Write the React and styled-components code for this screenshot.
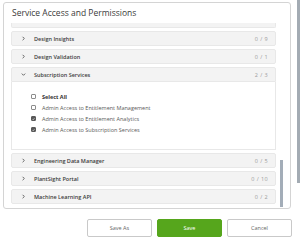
import React from 'react';
import styled, { createGlobalStyle } from 'styled-components';

const GlobalStyle = createGlobalStyle`
  html, body {
    margin: 0;
    padding: 0;
    background: #ffffff;
  }
  body {
    font-family: 'Open Sans', 'Liberation Sans', sans-serif;
    color: #333;
  }
`;

const Page = styled.div`
  display: flex;
  width: 301px;
  height: 240px;
  overflow: hidden;
`;

const Main = styled.div`
  width: 296px;
  padding: 2px 4px 0 3px;
  box-sizing: border-box;
  display: flex;
  flex-direction: column;
`;

const PageTrack = styled.div`
  width: 5px;
  display: flex;
  justify-content: flex-end;
  padding-right: 1px;
  box-sizing: border-box;
`;

const PageThumb = styled.div`
  width: 3px;
  height: 183px;
  background: #a3abb3;
`;

const Panel = styled.div`
  width: 288px;
  height: 207px;
  box-sizing: border-box;
  border: 1px solid #d4d4d4;
  border-radius: 3px;
  display: flex;
  flex-direction: column;
`;

const Title = styled.div`
  height: 20px;
  line-height: 20px;
  padding-left: 8px;
  font-size: 8.5px;
  color: #3a3a3a;
  flex-shrink: 0;
`;

const ScrollArea = styled.div`
  flex: 1;
  display: flex;
  min-height: 0;
  padding: 0 7px 0 7px;
`;

const ListViewport = styled.div`
  width: 265px;
  overflow: hidden;
`;

const List = styled.div`
  display: flex;
  flex-direction: column;
  gap: 3px;
`;

/* bottom edge of the group scrolled out above the viewport */
const ScrolledEdge = styled.div`
  height: 5px;
  box-sizing: border-box;
  background: #f3f3f3;
  border: 1px solid #e8e8e8;
  border-top: none;
  border-radius: 0 0 2px 2px;
`;

const InnerTrack = styled.div`
  width: 3px;
  margin-left: 4px;
  display: flex;
  flex-direction: column;
  justify-content: flex-end;
  padding-bottom: 1px;
`;

const InnerThumb = styled.div`
  height: 47px;
  background: #a3adb8;
`;

const Item = styled.div`
  display: flex;
  flex-direction: column;
`;

const Header = styled.div`
  height: 15px;
  box-sizing: border-box;
  display: flex;
  align-items: center;
  padding: 0 7px 0 9px;
  background: #f3f3f3;
  border: 1px solid #e8e8e8;
  border-radius: ${p => (p.$open ? '2px 2px 0 0' : '2px')};
`;

const Chevron = styled.svg`
  width: 5px;
  height: 5px;
  flex-shrink: 0;
`;

const Label = styled.span`
  margin-left: 8px;
  font-size: 5.5px;
  font-weight: 600;
  color: #3b3b3b;
  flex: 1;
  white-space: nowrap;
`;

const Count = styled.span`
  font-size: 5.5px;
  color: #9a9a9a;
  letter-spacing: 0.4px;
  white-space: nowrap;
`;

const Body = styled.div`
  height: 68px;
  box-sizing: border-box;
  border: 1px solid #e8e8e8;
  border-top: none;
  background: #fff;
  padding: 9px 0 0 19px;
  display: flex;
  flex-direction: column;
`;

const CheckRow = styled.div`
  height: 11px;
  display: flex;
  align-items: center;
`;

const Box = styled.span`
  width: 5px;
  height: 5px;
  box-sizing: border-box;
  border: 1px solid ${p => (p.$checked ? '#5a5a5a' : '#8c8c8c')};
  background: ${p => (p.$checked ? '#5a5a5a' : '#fff')};
  border-radius: 1px;
  display: flex;
  align-items: center;
  justify-content: center;
  flex-shrink: 0;
`;

const CheckLabel = styled.span`
  margin-left: 6px;
  font-size: 5.5px;
  font-weight: ${p => (p.$bold ? 700 : 400)};
  color: ${p => (p.$bold ? '#333' : '#5a5a5a')};
  white-space: nowrap;
`;

const Footer = styled.div`
  display: flex;
  justify-content: flex-end;
  gap: 5px;
  margin-top: 10px;
`;

const Button = styled.button`
  width: 65px;
  height: 18px;
  box-sizing: border-box;
  border: 1px solid ${p => (p.$primary ? '#56a61c' : '#c9c9c9')};
  background: ${p => (p.$primary ? '#56a61c' : '#fff')};
  color: ${p => (p.$primary ? '#fff' : '#666')};
  border-radius: 2px;
  font-family: 'Open Sans', 'Liberation Sans', sans-serif;
  font-size: 5.5px;
  padding: 0;
  cursor: pointer;
`;

const ChevronIcon = ({ open }) => (
  <Chevron viewBox="0 0 5 5">
    {open ? (
      <polyline points="0.8,1.6 2.5,3.3 4.2,1.6" fill="none" stroke="#444" strokeWidth="0.8" />
    ) : (
      <polyline points="1.6,0.8 3.3,2.5 1.6,4.2" fill="none" stroke="#444" strokeWidth="0.8" />
    )}
  </Chevron>
);

const Check = () => (
  <svg width="4" height="4" viewBox="0 0 4 4">
    <polyline points="0.6,2 1.6,3 3.4,0.9" fill="none" stroke="#fff" strokeWidth="0.7" />
  </svg>
);

const groups = [
  { name: 'Design Insights', count: '0 / 9' },
  { name: 'Design Validation', count: '0 / 1' },
  {
    name: 'Subscription Services',
    count: '2 / 3',
    open: true,
    items: [
      { label: 'Select All', bold: true, checked: false },
      { label: 'Admin Access to Entitlement Management', checked: false },
      { label: 'Admin Access to Entitlement Analytics', checked: true },
      { label: 'Admin Access to Subscription Services', checked: true },
    ],
  },
  { name: 'Engineering Data Manager', count: '0 / 5' },
  { name: 'PlantSight Portal', count: '0 / 10' },
  { name: 'Machine Learning API', count: '0 / 2' },
];

export default function App() {
  return (
    <>
      <GlobalStyle />
      <Page>
        <Main>
          <Panel>
            <Title>Service Access and Permissions</Title>
            <ScrollArea>
              <ListViewport>
                <List>
                  <ScrolledEdge />
                  {groups.map(g => (
                    <Item key={g.name}>
                      <Header $open={g.open}>
                        <ChevronIcon open={g.open} />
                        <Label>{g.name}</Label>
                        <Count>{g.count}</Count>
                      </Header>
                      {g.open && (
                        <Body>
                          {g.items.map(it => (
                            <CheckRow key={it.label}>
                              <Box $checked={it.checked}>{it.checked && <Check />}</Box>
                              <CheckLabel $bold={it.bold}>{it.label}</CheckLabel>
                            </CheckRow>
                          ))}
                        </Body>
                      )}
                    </Item>
                  ))}
                </List>
              </ListViewport>
              <InnerTrack>
                <InnerThumb />
              </InnerTrack>
            </ScrollArea>
          </Panel>
          <Footer>
            <Button>Save As</Button>
            <Button $primary>Save</Button>
            <Button>Cancel</Button>
          </Footer>
        </Main>
        <PageTrack>
          <PageThumb />
        </PageTrack>
      </Page>
    </>
  );
}
